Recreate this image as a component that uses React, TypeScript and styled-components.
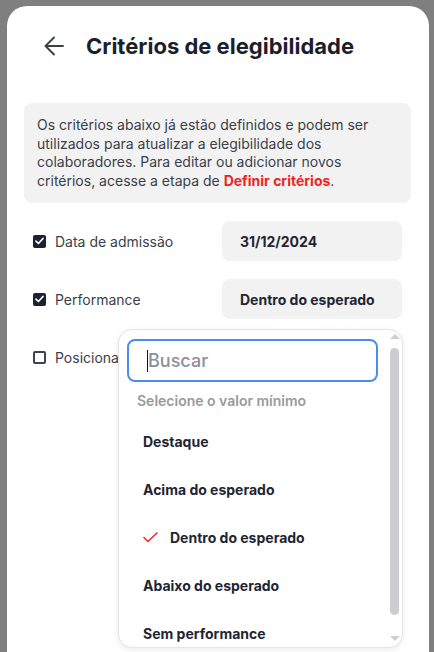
import styled, { createGlobalStyle } from "styled-components";

const GlobalStyle = createGlobalStyle`
  html, body {
    margin: 0;
    padding: 0;
    height: 100%;
    overflow: hidden;
    background: #7f7f7f;
    font-family: "Inter", "Noto Sans", sans-serif;
  }
  * { box-sizing: border-box; }
`;

const options = [
  "Destaque",
  "Acima do esperado",
  "Dentro do esperado",
  "Abaixo do esperado",
  "Sem performance",
];

function BackArrow() {
  return (
    <svg width="20" height="20" viewBox="0 0 20 20" fill="none">
      <path
        d="M19 10H1.5M10 1.5L1.5 10L10 18.5"
        stroke="#3b3f47"
        strokeWidth="1.9"
        strokeLinecap="round"
        strokeLinejoin="round"
      />
    </svg>
  );
}

function Check({ checked }: { checked: boolean }) {
  return (
    <CheckBox $checked={checked}>
      {checked && (
        <svg width="9" height="8" viewBox="0 0 9 8" fill="none">
          <path
            d="M1 4.2L3.4 6.5L8 1.5"
            stroke="#fff"
            strokeWidth="1.7"
            strokeLinecap="round"
            strokeLinejoin="round"
          />
        </svg>
      )}
    </CheckBox>
  );
}

function App() {
  return (
    <>
      <GlobalStyle />
      <Modal>
        <Header>
          <BackArrow />
          <Title>Critérios de elegibilidade</Title>
        </Header>
        <InfoBox>
          Os critérios abaixo já estão definidos e podem ser
          <br />
          utilizados para atualizar a elegibilidade dos
          <br />
          colaboradores. Para editar ou adicionar novos
          <br />
          critérios, acesse a etapa de <InfoLink>Definir critérios</InfoLink>.
        </InfoBox>
        <Rows>
          <Row>
            <Check checked />
            <Label>Data de admissão</Label>
            <ValueBox>31/12/2024</ValueBox>
          </Row>
          <Row>
            <Check checked />
            <Label>Performance</Label>
            <ValueBox>Dentro do esperado</ValueBox>
          </Row>
          <Row>
            <Check checked={false} />
            <Label>Posiciona</Label>
          </Row>
          <Dropdown>
            <ListColumn>
              <SearchBox>
                <Caret />
                <SearchText>Buscar</SearchText>
              </SearchBox>
              <Hint>Selecione o valor mínimo</Hint>
              {options.map((opt) => (
                <Option key={opt}>
                  {opt === "Dentro do esperado" && (
                    <svg width="15" height="11" viewBox="0 0 15 11" fill="none">
                      <path
                        d="M1 5.5L5 9.5L14 1"
                        stroke="#e8262b"
                        strokeWidth="1.5"
                        strokeLinecap="round"
                        strokeLinejoin="round"
                      />
                    </svg>
                  )}
                  <OptionText>{opt}</OptionText>
                </Option>
              ))}
            </ListColumn>
            <ScrollBar>
              <ArrowUp />
              <Thumb />
              <ArrowDown />
            </ScrollBar>
          </Dropdown>
        </Rows>
      </Modal>
    </>
  );
}

export default App;

const Modal = styled.div`
  margin: 6px 5px 0 7px;
  height: 700px;
  background: #fff;
  border-radius: 20px 20px 0 0;
  padding: 29px 18px 0 17px;
`;

const Header = styled.div`
  display: flex;
  align-items: center;
  gap: 22px;
  padding-left: 20px;
  height: 22px;
`;

const Title = styled.h1`
  margin: 0;
  font-size: 22px;
  font-weight: 700;
  color: #1b1f2a;
  letter-spacing: 0;
`;

const InfoBox = styled.div`
  margin-top: 46px;
  background: #f2f2f2;
  border-radius: 8px;
  padding: 13px 12px 13px 13px;
  font-size: 14px;
  line-height: 18.5px;
  color: #3a3f4a;
  white-space: nowrap;
`;

const InfoLink = styled.span`
  color: #ee2424;
  font-weight: 700;
`;

const Rows = styled.div`
  position: relative;
  display: flex;
  flex-direction: column;
  gap: 18px;
  margin-top: 18px;
  padding: 0 9px;
`;

const Row = styled.div`
  display: flex;
  align-items: center;
  height: 40px;
`;

const CheckBox = styled.span<{ $checked: boolean }>`
  width: 13px;
  height: 13px;
  border-radius: 2px;
  flex-shrink: 0;
  display: flex;
  align-items: center;
  justify-content: center;
  background: ${(p) => (p.$checked ? "#1d2230" : "#fff")};
  border: ${(p) => (p.$checked ? "none" : "2px solid #3d4350")};
`;

const Label = styled.span`
  margin-left: 9px;
  font-size: 14px;
  color: #3a3f4a;
  flex: 1;
`;

const ValueBox = styled.div`
  width: 180px;
  height: 40px;
  background: #f2f2f2;
  border-radius: 8px;
  display: flex;
  align-items: center;
  padding-left: 18px;
  font-size: 14px;
  font-weight: 700;
  color: #1f2533;
`;

const Dropdown = styled.div`
  position: absolute;
  left: 94px;
  top: 108px;
  width: 285px;
  height: 319px;
  background: #fff;
  border: 1px solid #e4e4e4;
  border-radius: 14px;
  box-shadow: 0 2px 6px rgba(0, 0, 0, 0.08);
  display: flex;
  overflow: hidden;
`;

const ListColumn = styled.div`
  flex: 1;
  padding: 9px 0 0 8px;
  display: flex;
  flex-direction: column;
  & > * {
    flex-shrink: 0;
  }
`;

const SearchBox = styled.div`
  width: 251px;
  height: 43px;
  border: 2px solid #4a8cf0;
  border-radius: 8px;
  display: flex;
  align-items: center;
  padding-left: 18px;
`;

const Caret = styled.span`
  width: 1px;
  height: 22px;
  background: #111;
`;

const SearchText = styled.span`
  font-size: 18px;
  font-weight: 500;
  color: #8c9099;
`;

const Hint = styled.div`
  margin: 11px 0 8px 10px;
  font-size: 14px;
  font-weight: 600;
  color: #9a9a9a;
  line-height: 16px;
`;

const Option = styled.div`
  height: 48px;
  display: flex;
  align-items: center;
  gap: 12px;
  padding-left: 16px;
`;

const OptionText = styled.span`
  font-size: 14px;
  font-weight: 700;
  color: #1f2533;
`;

const ScrollBar = styled.div`
  width: 11px;
  margin-right: 2px;
  display: flex;
  flex-direction: column;
  align-items: center;
  padding: 4px 0 6px;
`;

const ArrowUp = styled.span`
  width: 0;
  height: 0;
  border-left: 5px solid transparent;
  border-right: 5px solid transparent;
  border-bottom: 5px solid #cfcfcf;
`;

const ArrowDown = styled.span`
  width: 0;
  height: 0;
  border-left: 5px solid transparent;
  border-right: 5px solid transparent;
  border-top: 5px solid #cfcfcf;
`;

const Thumb = styled.span`
  width: 9px;
  margin: 9px 0 auto;
  height: 267px;
  border-radius: 5px;
  background: #cdcdcf;
`;
